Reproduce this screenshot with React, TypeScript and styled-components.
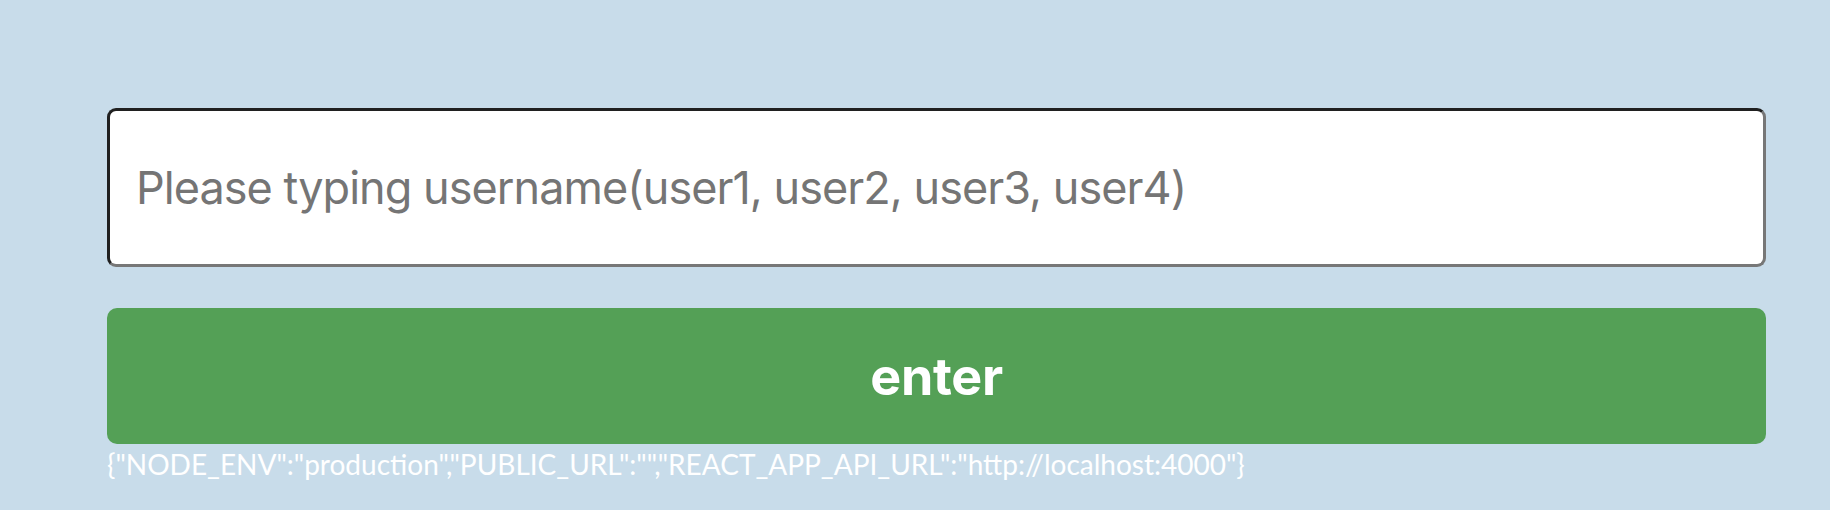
import styled, { createGlobalStyle } from "styled-components";

const GlobalStyle = createGlobalStyle`
  html, body {
    margin: 0;
    padding: 0;
    background-color: #c8dcea;
  }
`;

const Page = styled.div`
  width: 1830px;
  height: 510px;
  box-sizing: border-box;
  padding: 108px 64px 0 107px;
  display: flex;
  flex-direction: column;
`;

const Form = styled.form`
  display: flex;
  flex-direction: column;
  gap: 41px;
`;

const Input = styled.input`
  box-sizing: border-box;
  height: 159px;
  width: 100%;
  padding: 0 26px;
  border-width: 3px;
  border-style: solid;
  border-color: #202020 #777777 #777777 #202020;
  border-radius: 9px;
  background: #ffffff;
  font-family: Inter, "Liberation Sans", Arial, sans-serif;
  font-size: 45px;
  letter-spacing: -0.95px;
  color: #222;
  outline: none;

  &::placeholder {
    color: #757575;
  }
`;

const Button = styled.button`
  height: 136px;
  width: 100%;
  border: none;
  border-radius: 10px;
  background-color: #54a056;
  color: #ffffff;
  font-family: Inter, "Liberation Sans", Arial, sans-serif;
  font-weight: 700;
  font-size: 52px;
  letter-spacing: -0.3px;
  cursor: pointer;
`;

const EnvText = styled.div`
  margin-top: 5px;
  font-family: Lato, sans-serif;
  font-size: 28px;
  line-height: 30px;
  color: #ffffff;
`;

const env = {
  NODE_ENV: "production",
  PUBLIC_URL: "",
  REACT_APP_API_URL: "http://localhost:4000",
};

export default function App() {
  return (
    <>
      <GlobalStyle />
      <Page>
        <Form onSubmit={(e) => e.preventDefault()}>
          <Input placeholder="Please typing username(user1, user2, user3, user4)" />
          <Button>enter</Button>
        </Form>
        <EnvText>{JSON.stringify(env)}</EnvText>
      </Page>
    </>
  );
}
